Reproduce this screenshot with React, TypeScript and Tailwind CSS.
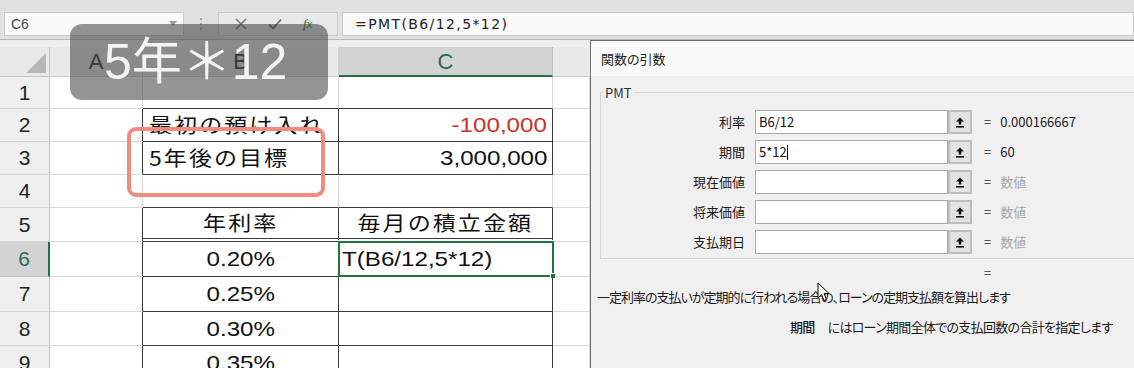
import React from "react";

type RowDef = {
  n: number;
  h: string;
  aDark: boolean;
  bc: "light" | "dark" | "double";
  b?: React.ReactNode;
  c?: React.ReactNode;
  bAlign?: string;
  cAlign?: string;
  sel?: boolean;
};

const JP = "inline-block font-['Noto_Sans_CJK_JP',sans-serif] text-[20px] tracking-[1.8px] scale-x-[1.15]";
const NUM = "inline-block text-[21px] scale-x-[1.15]";

const rows: RowDef[] = [
  { n: 1, h: "h-[32px]", aDark: false, bc: "dark" },
  {
    n: 2,
    h: "h-[33px]",
    aDark: true,
    bc: "dark",
    b: <span className={JP + " origin-left"}>最初の預け入れ</span>,
    c: <span className={NUM + " origin-right text-[#c8322a]"}>-100,000</span>,
    bAlign: "justify-start pl-[6px]",
    cAlign: "justify-end pr-[5px]",
  },
  {
    n: 3,
    h: "h-[33px]",
    aDark: true,
    bc: "dark",
    b: <span className={JP + " origin-left"}>5年後の目標</span>,
    c: <span className={NUM + " origin-right"}>3,000,000</span>,
    bAlign: "justify-start pl-[6px]",
    cAlign: "justify-end pr-[5px]",
  },
  { n: 4, h: "h-[33px]", aDark: false, bc: "dark" },
  {
    n: 5,
    h: "h-[34px]",
    aDark: true,
    bc: "double",
    b: <span className={JP + " origin-center"}>年利率</span>,
    c: <span className={JP + " origin-center"}>毎月の積立金額</span>,
    bAlign: "justify-center",
    cAlign: "justify-center",
  },
  {
    n: 6,
    h: "h-[35px]",
    aDark: true,
    bc: "dark",
    b: <span className={NUM + " origin-center"}>0.20%</span>,
    c: <span className={NUM + " origin-left"}>T(B6/12,5*12)</span>,
    bAlign: "justify-center",
    cAlign: "justify-start pl-[3px]",
    sel: true,
  },
  {
    n: 7,
    h: "h-[35px]",
    aDark: true,
    bc: "dark",
    b: <span className={NUM + " origin-center"}>0.25%</span>,
    bAlign: "justify-center",
  },
  {
    n: 8,
    h: "h-[34px]",
    aDark: true,
    bc: "dark",
    b: <span className={NUM + " origin-center"}>0.30%</span>,
    bAlign: "justify-center",
  },
  {
    n: 9,
    h: "h-[34px]",
    aDark: true,
    bc: "dark",
    b: <span className={NUM + " origin-center"}>0.35%</span>,
    bAlign: "justify-center",
  },
];

function UpIcon() {
  return (
    <svg width="10" height="11" viewBox="0 0 10 11">
      <path d="M5 0.5 L9 4.5 H6.3 V7.5 H3.7 V4.5 H1 Z" fill="#111" />
      <rect x="1" y="9" width="8" height="1.6" fill="#111" />
    </svg>
  );
}

function Toolbar() {
  return (
    <div className="h-[40px] bg-[#e1e1e1] flex items-start pt-[12px] pl-[4px] border-b border-b-[#b9b9b9]">
      <div className="w-[180px] h-[24px] bg-[#fafafa] border border-[#c9c9c9] flex items-center justify-between pl-[6px] pr-[6px] text-[14px] text-[#444]">
        <span>C6</span>
        <svg width="8" height="6" viewBox="0 0 8 6">
          <path d="M0 0 H8 L4 5 Z" fill="#9a9a9a" />
        </svg>
      </div>
      <div className="w-[34px] h-[24px] flex flex-col items-center justify-center gap-[3px]">
        <span className="w-[2px] h-[2px] bg-[#a8a8a8]" />
        <span className="w-[2px] h-[2px] bg-[#a8a8a8]" />
        <span className="w-[2px] h-[2px] bg-[#a8a8a8]" />
      </div>
      <div className="w-[120px] h-[24px] border border-[#c9c9c9] bg-[#e9e9e9] flex items-center">
        <svg className="ml-[16px]" width="12" height="12" viewBox="0 0 12 12">
          <path d="M1 1 L11 11 M11 1 L1 11" stroke="#7a7a7a" strokeWidth="1.6" />
        </svg>
        <svg className="ml-[21px]" width="14" height="12" viewBox="0 0 14 12">
          <path d="M1 6.5 L5 10.5 L13 1.5" stroke="#6f6f6f" strokeWidth="1.8" fill="none" />
        </svg>
        <span className="ml-[21px] italic text-[13px] text-[#217346] font-['Liberation_Serif',serif]">fx</span>
      </div>
      <div className="ml-[4px] flex-1 h-[24px] bg-[#fafafa] border border-[#c9c9c9] flex items-center pl-[12px] text-[14px] tracking-[1.4px] text-[#222] font-['DejaVu_Sans',sans-serif]">
        =PMT(B6/12,5*12)
      </div>
    </div>
  );
}

function HeaderRow() {
  return (
    <div className="flex h-[30px]">
      <div className="w-[50px] bg-[#e9e9e9] border-r border-b border-[#c6c6c6] flex items-end justify-end pr-[3px] pb-[3px]">
        <svg width="20" height="20" viewBox="0 0 20 20">
          <path d="M20 0 V20 H0 Z" fill="#b7b7b7" />
        </svg>
      </div>
      <div className="w-[93px] bg-[#e9e9e9] border-r border-b border-[#d0d0d0] flex items-center justify-center text-[22px] text-[#333]">A</div>
      <div className="w-[196px] bg-[#e9e9e9] border-r border-b border-[#d0d0d0] flex items-center justify-center text-[22px] text-[#333]">B</div>
      <div className="w-[214px] bg-[#d3d3d3] border-r border-r-[#c0c0c0] border-b-2 border-b-[#217346] flex items-center justify-center text-[22px] text-[#2f6a4b]">C</div>
      <div className="flex-1 bg-[#e9e9e9] border-b border-[#d0d0d0]" />
    </div>
  );
}

function SheetRow({ r }: { r: RowDef }) {
  const bottom =
    r.bc === "double"
      ? "border-b-[4px] border-double border-b-[#3a3a3a]"
      : r.bc === "dark"
      ? "border-b border-b-[#3a3a3a]"
      : "border-b border-b-[#dadada]";
  const dark = r.aDark;
  return (
    <div className={"flex " + r.h}>
      <div
        className={
          r.sel
            ? "w-[50px] bg-[#d3d3d3] border-r-2 border-r-[#217346] border-b border-b-[#c6c6c6] flex items-center justify-center text-[21px] text-[#2f6a4b]"
            : "w-[50px] bg-[#efefef] border-r border-r-[#c6c6c6] border-b border-b-[#d6d6d6] flex items-center justify-center text-[21px] text-[#222]"
        }
      >
        {r.n}
      </div>
      <div
        className={
          dark
            ? "w-[93px] border-r border-r-[#3a3a3a] border-b border-b-[#dadada]"
            : "w-[93px] border-r border-r-[#dadada] border-b border-b-[#dadada]"
        }
      />
      <div
        className={
          (dark ? "w-[196px] border-r border-r-[#3a3a3a] " : "w-[196px] border-r border-r-[#dadada] ") +
          bottom +
          " flex items-center text-[#111] " +
          (r.bAlign ?? "")
        }
      >
        {r.b}
      </div>
      <div
        className={
          (dark ? "relative w-[214px] border-r border-r-[#3a3a3a] " : "relative w-[214px] border-r border-r-[#dadada] ") +
          bottom +
          " flex items-center text-[#111] " +
          (r.cAlign ?? "")
        }
      >
        {r.c}
        {r.sel && (
          <>
            <div className="absolute -left-[1px] -top-[1px] -right-[2px] -bottom-[1px] border-2 border-[#217346]" />
            <div className="absolute -right-[4px] -bottom-[3px] w-[6px] h-[6px] bg-[#217346] border border-white" />
          </>
        )}
      </div>
      <div className="flex-1 border-b border-b-[#dadada]">
        <div className="w-[37px] h-full border-r border-r-[#dadada]" />
      </div>
    </div>
  );
}

function Field({ label, value, placeholder }: { label: string; value?: string; placeholder?: boolean }) {
  return (
    <div className="flex items-center h-[24px]">
      <div className="w-[144px] text-right text-[13px] text-[#1b1b1b]">{label}</div>
      <div className="ml-[10px] w-[193px] h-[24px] bg-white border border-[#a9a9a9] flex items-center pl-[3px] text-[13px] text-[#111]">
        {label === "期間" ? (
          <>
            <span>5*12</span>
            <span className="w-[1px] h-[15px] bg-black" />
          </>
        ) : (
          value
        )}
      </div>
      <div className="w-[24px] h-[24px] bg-[#e2e2e2] border-2 border-[#bdbdbd] flex items-center justify-center">
        <UpIcon />
      </div>
      <div className="ml-[12px] text-[13px] text-[#333]">=</div>
      <div className={placeholder ? "ml-[9px] text-[13px] text-[#a9a9a9]" : "ml-[9px] text-[13px] text-[#1b1b1b]"}>
        {placeholder ? "数値" : label === "利率" ? "0.000166667" : "60"}
      </div>
    </div>
  );
}

function Dialog() {
  return (
    <div className="absolute left-[590px] top-[40px] w-[544px] h-[328px] border-l border-t border-[#6f6f6f] flex flex-col font-['Noto_Sans_CJK_JP',sans-serif] [font-feature-settings:'palt']">
      <div className="h-[35px] bg-[#fafafa] flex items-center pl-[10px] text-[13px] text-[#222]">関数の引数</div>
      <div className="flex-1 bg-[#f0f0f0] pt-[16px] overflow-hidden">
        <div className="relative ml-[9px] w-[600px] h-[167px] border border-[#d7d7d7] pt-[17px]">
          <div className="absolute -top-[10px] left-[2px] bg-[#f0f0f0] px-[2px] text-[13px] text-[#333]">PMT</div>
          <div className="flex flex-col gap-[6px]">
            <Field label="利率" value="B6/12" />
            <Field label="期間" value="5*12" />
            <Field label="現在価値" placeholder />
            <Field label="将来価値" placeholder />
            <Field label="支払期日" placeholder />
          </div>
        </div>
        <div className="h-[16px] mt-[6px] pl-[393px] text-[13px] leading-[16px] text-[#333]">=</div>
        <div className="mt-[7px] pl-[6px] text-[13px] leading-[18px] tracking-[-1px] text-[#1b1b1b] whitespace-nowrap">
          一定利率の支払いが定期的に行われる場合の、ローンの定期支払額を算出します
        </div>
        <div className="mt-[12px] pl-[199px] text-[13px] leading-[18px] tracking-[-0.7px] text-[#1b1b1b] whitespace-nowrap">
          <span className="font-medium">期間</span>
          <span className="ml-[13px]">にはローン期間全体での支払回数の合計を指定します</span>
        </div>
      </div>
    </div>
  );
}

export default function App() {
  return (
    <div className="relative w-[1134px] h-[368px] overflow-hidden bg-white font-['Liberation_Sans','Noto_Sans_CJK_JP',sans-serif]">
      <Toolbar />
      <div className="h-[7px] bg-[#eeeeee]" />
      <HeaderRow />
      {rows.map((r) => (
        <SheetRow key={r.n} r={r} />
      ))}
      <Dialog />
      {/* caption overlay */}
      <div className="absolute left-[70px] top-[24px] w-[258px] h-[76px] rounded-[12px] bg-[rgba(60,60,60,0.55)] flex items-center pl-[34px]">
        <span className="text-[50px] leading-none text-white/90 font-['Liberation_Sans','Noto_Sans_CJK_JP',sans-serif]">5年＊12</span>
      </div>
      {/* red highlight */}
      <div className="absolute left-[127px] top-[127px] w-[198px] h-[70px] rounded-[9px] border-[4px] border-[#f08b80]" />
      {/* mouse cursor */}
      <svg className="absolute left-[817px] top-[282px]" width="13" height="20" viewBox="0 0 13 20">
        <path d="M1 1 L1 16 L4.5 12.5 L7 18.5 L9.5 17.5 L7 11.5 L12 11.5 Z" fill="white" stroke="black" strokeWidth="1" />
      </svg>
    </div>
  );
}
